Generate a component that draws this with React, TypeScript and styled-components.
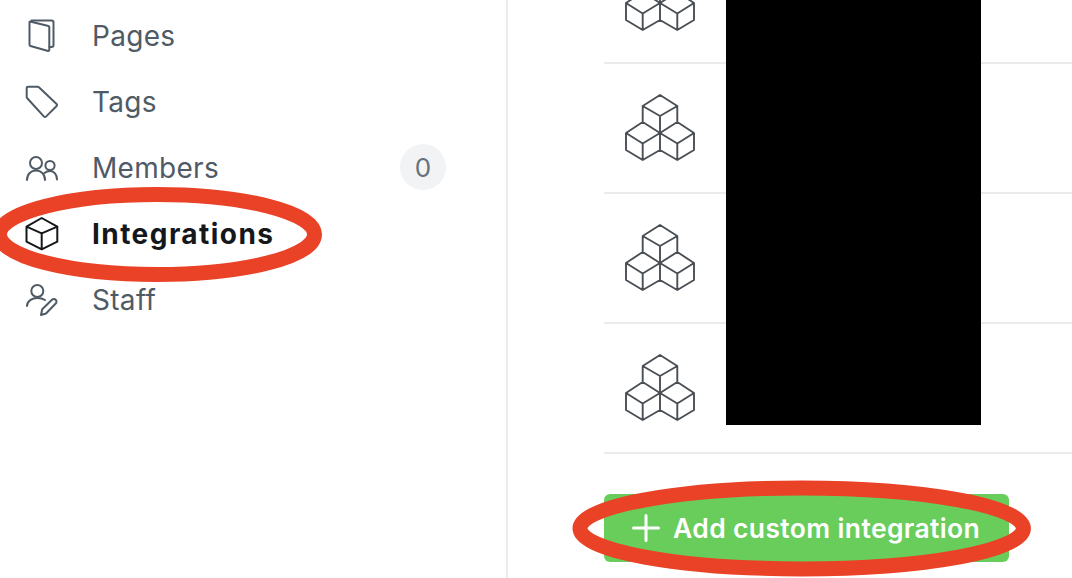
import { ReactElement } from 'react'
import styled, { createGlobalStyle } from 'styled-components'

const GlobalStyle = createGlobalStyle`
  html, body {
    margin: 0;
    padding: 0;
    background: #fff;
  }
  * {
    box-sizing: border-box;
  }
`

const SPage = styled.div`
  position: relative;
  display: flex;
  width: 1072px;
  height: 578px;
  overflow: hidden;
  font-family: Inter, 'Liberation Sans', sans-serif;
`

const SSidebar = styled.nav`
  width: 508px;
  flex-shrink: 0;
  padding: 3px 60px 0 24px;
  border-right: 2px solid #ebebeb;
`

const SNavItem = styled.div`
  display: flex;
  align-items: center;
  gap: 32px;
  height: 66px;
`

const SNavIcon = styled.svg<{ $active?: boolean }>`
  width: 36px;
  height: 36px;
  flex-shrink: 0;
  fill: none;
  stroke: ${({ $active }): string => ($active ? '#15171a' : '#4f5a65')};
  stroke-width: 2;
  stroke-linecap: round;
  stroke-linejoin: round;
`

const SNavLabel = styled.span<{ $active?: boolean }>`
  flex: 1;
  font-size: 28px;
  line-height: 36px;
  font-weight: ${({ $active }): number => ($active ? 700 : 400)};
  color: ${({ $active }): string => ($active ? '#15171a' : '#4f5a65')};
  letter-spacing: ${({ $active }): string => ($active ? '1.45px' : '0.3px')};
`

const SBadge = styled.span`
  display: flex;
  align-items: center;
  justify-content: center;
  width: 46px;
  height: 46px;
  margin-top: -2px;
  border-radius: 50%;
  background: #f1f3f4;
  color: #66717c;
  font-size: 26px;
`

const SMain = styled.main`
  position: relative;
  flex: 1;
  padding-left: 96px;
`

const SList = styled.div`
  margin-top: -66px;
`

const SRow = styled.div`
  display: flex;
  align-items: center;
  height: 130px;
  padding-left: 20px;
  border-bottom: 2px solid #ebebeb;
`

const SStackIcon = styled.svg`
  width: 72px;
  height: 70px;
  fill: none;
  stroke: #4a4f55;
  stroke-width: 1.9;
  stroke-linejoin: round;
`

const SAddButton = styled.button`
  display: flex;
  align-items: center;
  gap: 13px;
  width: 405px;
  height: 68px;
  margin-top: 40px;
  padding: 0 0 0 28px;
  border: 0;
  border-radius: 6px;
  background: #69cd5b;
  color: #fff;
  font-family: inherit;
  font-size: 26.5px;
  font-weight: 600;
  letter-spacing: 0.36px;
  white-space: nowrap;
`

const SPlus = styled.svg`
  width: 28px;
  height: 28px;
  flex-shrink: 0;
  stroke: #fff;
  stroke-width: 3;
  stroke-linecap: round;
`

const SRedaction = styled.div`
  position: absolute;
  top: 0;
  left: 218px;
  width: 255px;
  height: 425px;
  background: #000;
`

const SMarkup = styled.svg`
  position: absolute;
  top: 0;
  left: 0;
  width: 1072px;
  height: 578px;
  fill: none;
  stroke: #ea4227;
  stroke-width: 15;
  pointer-events: none;
`

const navItems: { label: string; icon: ReactElement; active?: boolean; count?: number }[] = [
  {
    label: 'Pages',
    icon: (
      <>
        <path d="M6 3.5 L24.5 8 a1 1 0 0 1 .8 1 V32 a1 1 0 0 1 -1.2 1 L6.5 28 a1.2 1.2 0 0 1 -1 -1.2 V4 a.5 .5 0 0 1 .5 -.5 Z" />
        <path d="M7.5 2.5 H27.5 a2 2 0 0 1 2 2 V27 a2 2 0 0 1 -2 2 H25.5" />
      </>
    ),
  },
  {
    label: 'Tags',
    icon: <path d="M4 2.7 H13.5 a2 2 0 0 1 1.4 .6 L32.6 20 a1.4 1.4 0 0 1 0 2 L22 32.6 a1.4 1.4 0 0 1 -2 0 L3.5 14.5 a2.4 2.4 0 0 1 -.8 -1.8 V4 a1.3 1.3 0 0 1 1.3 -1.3 Z" />,
  },
  {
    label: 'Members',
    count: 0,
    icon: (
      <>
        <circle cx="12" cy="13" r="6" />
        <path d="M3 30 C3 24 7 20.5 12 20.5 C17 20.5 21 24 21 30" />
        <circle cx="26" cy="15.5" r="4.6" />
        <path d="M20.5 23 C22 21.8 24 21 26 21 C30 21 33 24.5 33 29.5" />
      </>
    ),
  },
  {
    label: 'Integrations',
    active: true,
    icon: <path d="M17.7 2 L33.3 10.7 V25.7 L17.7 33.3 L2.5 25.7 V10.7 Z M2.5 10.7 L17.7 17.3 L33.3 10.7 M17.7 17.3 V33.3" />,
  },
  {
    label: 'Staff',
    icon: (
      <>
        <circle cx="13.3" cy="9" r="6" />
        <path d="M3 24 C3 19 8 16 13.5 16 C16.5 16 19 16.7 21 18" />
        <path d="M17 33 L18.2 27.3 L28 17.8 a2.6 2.6 0 0 1 3.7 0 a2.6 2.6 0 0 1 0 3.7 L22 31.5 Z" />
      </>
    ),
  },
]

const stackPath =
  'M35 2 L52.3 13 V29 L35 40 L17.7 29 V13 Z M17.7 13 L35 23 L52.3 13 M35 23 V40 ' +
  'M17.7 29 L35 40 V57 L17.7 67 L1 57 V40 Z M1 40 L17.7 50.5 L35 40 M17.7 50.5 V67 ' +
  'M52.3 29 L69 40 V57 L52.3 67 L35 57 M35 40 L52.3 50.5 L69 40 M52.3 50.5 V67'

function App(): ReactElement {
  return (
    <SPage>
      <GlobalStyle />
      <SSidebar>
        {navItems.map((item) => (
          <SNavItem key={item.label}>
            <SNavIcon viewBox="0 0 36 36" $active={item.active}>
              {item.icon}
            </SNavIcon>
            <SNavLabel $active={item.active}>{item.label}</SNavLabel>
            {item.count !== undefined && <SBadge>{item.count}</SBadge>}
          </SNavItem>
        ))}
      </SSidebar>
      <SMain>
        <SList>
          {[0, 1, 2, 3].map((row) => (
            <SRow key={row}>
              <SStackIcon viewBox="0 0 70 70">
                <path d={stackPath} />
              </SStackIcon>
            </SRow>
          ))}
        </SList>
        <SAddButton>
          <SPlus viewBox="0 0 28 28">
            <path d="M14 1.5 V26.5 M1.5 14 H26.5" />
          </SPlus>
          Add custom integration
        </SAddButton>
        <SRedaction />
      </SMain>
      <SMarkup viewBox="0 0 1072 578">
        <ellipse cx="157" cy="234.5" rx="157.5" ry="40" />
        <ellipse cx="801.7" cy="528.4" rx="221.7" ry="40.5" />
      </SMarkup>
    </SPage>
  )
}

export default App
